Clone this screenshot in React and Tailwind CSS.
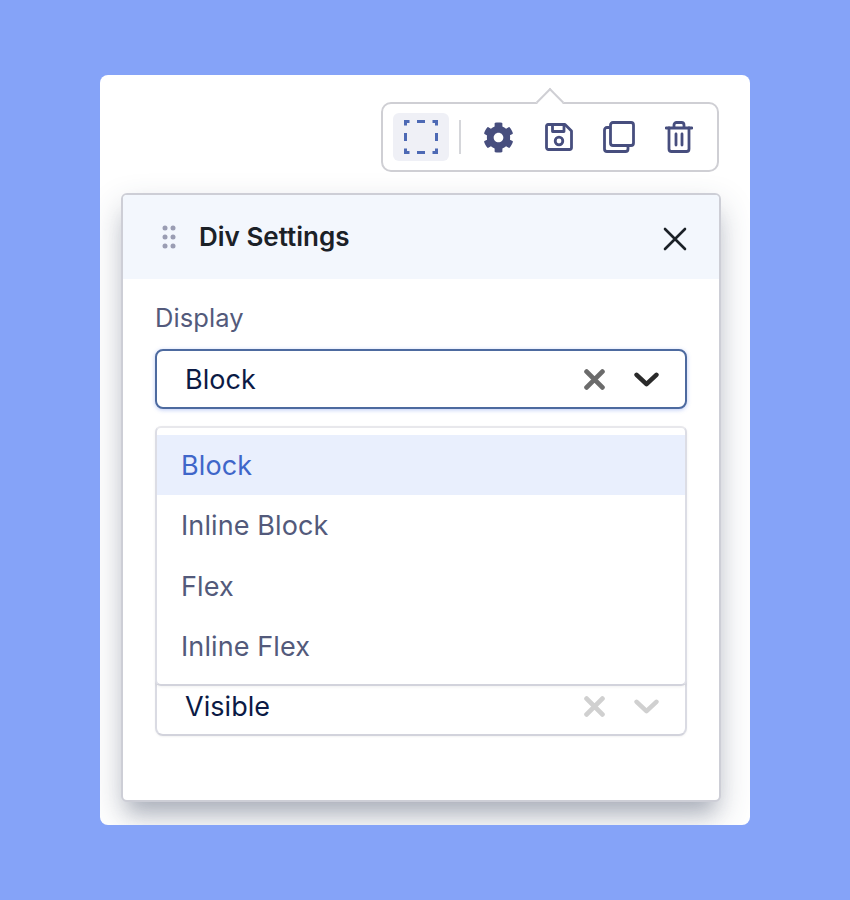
import React from "react";
import { FaCog } from "react-icons/fa";

const font = { fontFamily: "Inter, sans-serif" };

function Cross({ className }) {
  return (
    <svg viewBox="0 0 20 20" width="21" height="21" className={className} fill="none" stroke="currentColor" strokeWidth="4.600" strokeLinecap="round">
      <path d="M2.5 2.5 17.5 17.5M17.5 2.5 2.5 17.5" />
    </svg>
  );
}

function Chevron({ className }) {
  return (
    <svg viewBox="0 0 24 16" width="25" height="17" className={className} fill="none" stroke="currentColor" strokeWidth="4.400" strokeLinecap="round" strokeLinejoin="round">
      <path d="M2.5 3.5 12 12.5 21.5 3.5" />
    </svg>
  );
}

function Select({ value, focused, children }) {
  return (
    <div className={`flex h-[60px] items-center justify-between rounded-[8px] border-2 bg-white pl-[28px] pr-[26px] text-[27px] leading-none tracking-[0.05px] text-[#0b1a45] ${focused ? "border-[#4d6a9f] shadow-[0_1px_4px_rgba(65,105,225,0.35)]" : "border-[#dadbe3] border-b-[#d2d3dc] shadow-[0_1px_2px_rgba(0,0,0,0.05)]"}`}>
      <span>{value}</span>
      {children}
    </div>
  );
}

export default function App() {
  return (
    <div style={font} className="flex h-[900px] w-[850px] items-center justify-center bg-[#85a3f8]">
      <div className="flex h-[750px] w-[650px] flex-col overflow-hidden rounded-[8px] bg-white pl-[21px] pr-[29px] pt-[27px]">
        <div className="relative ml-auto mr-[2px] flex h-[70px] w-[338px] items-center rounded-[10px] border-2 border-[#cfcfd4] bg-white pl-[10px]">
          <div className="absolute -top-[12px] left-[157px] h-[20px] w-[20px] rotate-45 border-l-2 border-t-2 border-[#cfcfd4] bg-white" />
          <div className="flex h-[48px] w-[56px] items-center justify-center rounded-[6px] bg-[#eff0f6]">
            <svg width="34" height="34" viewBox="0 0 34 34" fill="none" stroke="#4d69b4" strokeWidth="3">
              <path d="M1.5 5.500V1.5H5.500M13 1.5H21M28.500 1.5H32.500V5.500M32.500 13V21M32.500 28.500V32.500H28.500M21 32.500H13M5.500 32.500H1.500V28.500M1.500 21V13" />
            </svg>
          </div>
          <div className="ml-[10px] h-[34px] w-[2px] bg-[#d5d6da]" />
          <div className="ml-[22px] flex items-center text-[#474e7e]">
            <FaCog size={31} />
            <svg width="28" height="28" viewBox="0 0 28 28" fill="none" stroke="currentColor" strokeWidth="2.800" strokeLinejoin="round" className="ml-[31px]">
              <path d="M3 1.500H20L26.500 8V24.500A2 2 0 0 1 24.500 26.500H3.500A2 2 0 0 1 1.500 24.500V3A1.500 1.500 0 0 1 3 1.500Z" />
              <path d="M7.500 1.500V8.500H19V1.500" />
              <circle cx="14" cy="18" r="3.800" />
            </svg>
            <svg width="32" height="32" viewBox="0 0 32 32" fill="none" stroke="currentColor" strokeWidth="2.800" strokeLinejoin="round" className="ml-[30px]">
              <rect x="7.500" y="1.500" width="23" height="23" rx="2.500" />
              <path d="M7.500 6.500H4A2.500 2.500 0 0 0 1.500 9V28A2.500 2.500 0 0 0 4 30.500H22.500A2.500 2.500 0 0 0 25 28V24.500" />
            </svg>
            <svg width="28" height="32" viewBox="0 0 28 32" fill="none" stroke="currentColor" strokeWidth="2.800" strokeLinejoin="round" strokeLinecap="round" className="ml-[30px]">
              <path d="M1 7H27M9 7V4A2.500 2.500 0 0 1 11.500 1.500H16.500A2.500 2.500 0 0 1 19 4V7" />
              <path d="M4 7V28A2.500 2.500 0 0 0 6.500 30.500H21.500A2.500 2.500 0 0 0 24 28V7" />
              <path d="M11 13V24M17 13V24" />
            </svg>
          </div>
        </div>

        <div className="mt-[21px] h-[609px] rounded-[6px] border-2 border-[#cdced6] bg-white shadow-[0_14px_32px_rgba(50,62,90,0.26),0_18px_18px_-8px_rgba(50,62,90,0.22)]">
          <div className="flex h-[84px] items-center justify-between rounded-t-[4px] bg-[#f3f7fd] pl-[39px] pr-[32px]">
            <div className="flex items-center">
              <svg width="14" height="24" viewBox="0 0 14 24" fill="#9a9db3">
                <circle cx="3" cy="3" r="2.500" /><circle cx="11" cy="3" r="2.500" />
                <circle cx="3" cy="12" r="2.500" /><circle cx="11" cy="12" r="2.500" />
                <circle cx="3" cy="21" r="2.500" /><circle cx="11" cy="21" r="2.500" />
              </svg>
              <span className="ml-[23px] text-[26px] font-semibold leading-none text-[#1b2127]">Div Settings</span>
            </div>
            <svg width="24" height="24" viewBox="0 0 24 24" fill="none" stroke="#1b2127" strokeWidth="2.600" strokeLinecap="round" className="mt-[4px]">
              <path d="M2 2 22 22M22 2 2 22" />
            </svg>
          </div>

          <div className="relative px-[32px] pt-[24px]">
            <div className="text-[25.500px] leading-[30px] tracking-[0.1px] text-[#535a7b]">Display</div>
            <div className="mt-[16px]">
              <Select value="Block" focused>
                <div className="flex items-center gap-[29px]">
                  <Cross className="text-[#6b6b6b]" />
                  <Chevron className="text-[#2a2a2a]" />
                </div>
              </Select>
            </div>
            <div className="mt-[267px]">
              <Select value="Visible">
                <div className="flex items-center gap-[29px]">
                  <Cross className="text-[#d0d0d0]" />
                  <Chevron className="text-[#d0d0d0]" />
                </div>
              </Select>
            </div>
            <div className="absolute left-[32px] top-[147px] w-[532px] rounded-[6px] border-2 border-[#dcdde5] border-t-[#e8e8ec] border-b-[#d2d3dc] bg-white py-[7px] text-[27px] leading-none tracking-[0.1px] text-[#535a7b] shadow-[0_1px_3px_rgba(0,0,0,0.06)]">
              <div className="flex h-[60px] items-center bg-[#e9effd] pl-[24px] text-[#3f66c9]">Block</div>
              <div className="flex h-[61px] items-center pl-[24px]">Inline Block</div>
              <div className="flex h-[60px] items-center pl-[24px]">Flex</div>
              <div className="flex h-[61px] items-center pl-[24px]">Inline Flex</div>
            </div>
          </div>
        </div>
      </div>
    </div>
  );
}
